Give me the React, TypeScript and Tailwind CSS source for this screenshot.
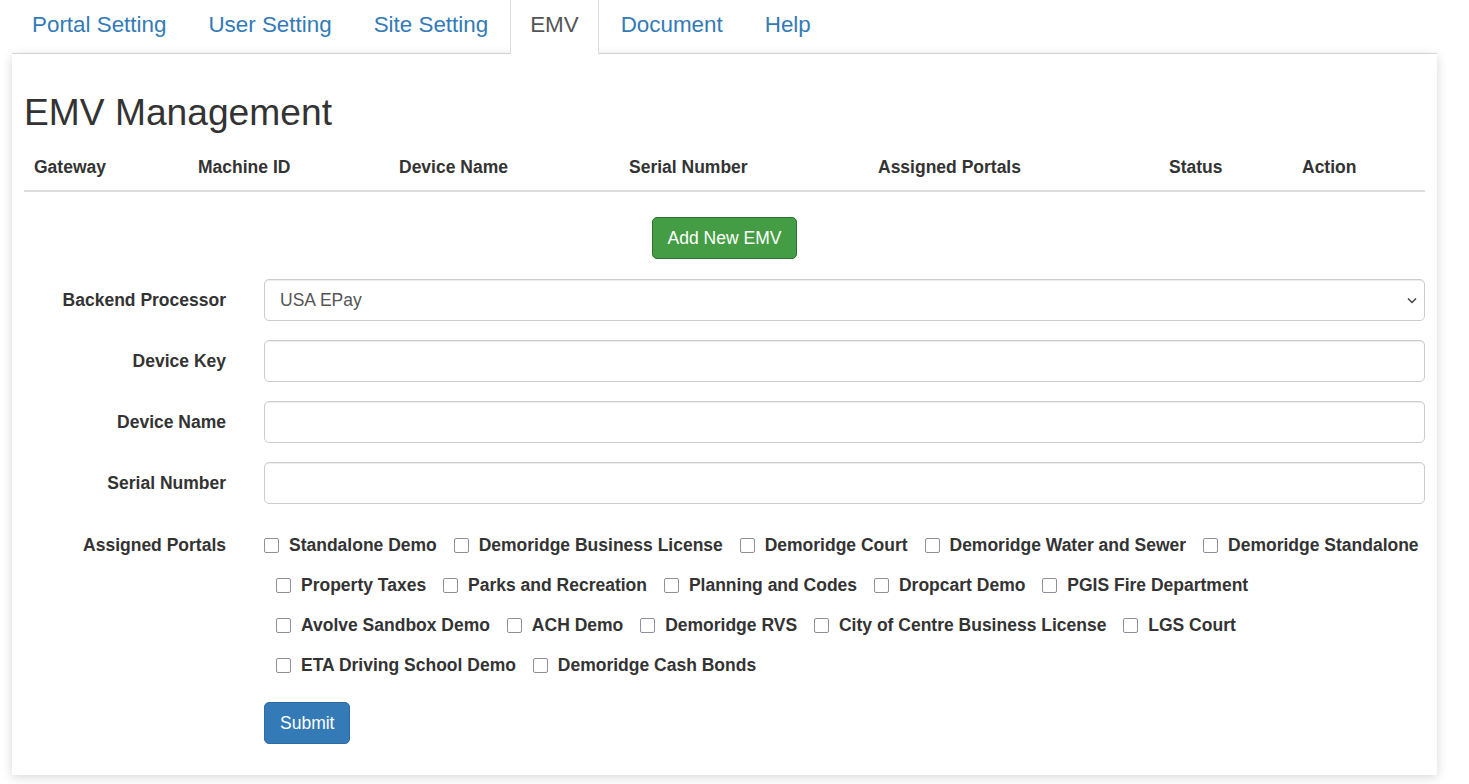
import React from 'react';

const tabs = ['Portal Setting', 'User Setting', 'Site Setting', 'EMV', 'Document', 'Help'];

const columns = ['Gateway', 'Machine ID', 'Device Name', 'Serial Number', 'Assigned Portals', 'Status', 'Action'];

const portals = [
  'Standalone Demo',
  'Demoridge Business License',
  'Demoridge Court',
  'Demoridge Water and Sewer',
  'Demoridge Standalone',
  'Property Taxes',
  'Parks and Recreation',
  'Planning and Codes',
  'Dropcart Demo',
  'PGIS Fire Department',
  'Avolve Sandbox Demo',
  'ACH Demo',
  'Demoridge RVS',
  'City of Centre Business License',
  'LGS Court',
  'ETA Driving School Demo',
  'Demoridge Cash Bonds',
];

const inputClass =
  'block w-full h-[42px] px-[15px] border border-[#ccc] rounded-[5px] bg-white text-[#555] shadow-[inset_0_1px_1px_rgba(0,0,0,0.075)] outline-none';

const App: React.FC = () => {
  return (
    <div className="min-h-screen bg-white font-['Liberation_Sans',Arial,sans-serif] text-[17.5px] text-[#333]">
      <div className="w-[1425px] ml-[12px]">
        {/* Tabs */}
        <ul className="flex h-[54px] border-b border-[#ddd]">
          {tabs.map((tab) => {
            const active = tab === 'EMV';
            return (
              <li key={tab} className="-mb-px mr-[2px]">
                <a
                  href="#"
                  className={
                    active
                      ? 'flex items-center h-[54px] pb-[5px] px-[19px] text-[22.4px] bg-white text-[#555] border-l border-r border-[#ddd]'
                      : 'flex items-center h-[54px] pb-[5px] px-[19px] text-[22.4px] text-[#337ab7] border-l border-r border-transparent'
                  }
                >
                  {tab}
                </a>
              </li>
            );
          })}
        </ul>

        {/* Card */}
        <div className="bg-white px-[12px] pt-[13px] pb-[31px] shadow-[0_2px_10px_rgba(0,0,0,0.16)]">
          <h1 className="mt-[25px] mb-[12px] text-[37.2px] leading-[41px] font-normal text-[#333]">EMV Management</h1>

          {/* Table header */}
          <div className="grid grid-cols-[164px_201px_230px_249px_291px_133px_1fr] border-b-2 border-[#ddd]">
            {columns.map((col) => (
              <div key={col} className="pl-[10px] py-[10px] leading-[25px] font-bold">
                {col}
              </div>
            ))}
          </div>

          <div className="flex justify-center mt-[25px]">
            <button
              type="button"
              className="h-[42px] px-[15px] bg-[#449d44] border border-[#2f6f2f] rounded-[5px] text-white"
            >
              Add New EMV
            </button>
          </div>

          {/* Form */}
          <form className="mt-[20px] grid grid-cols-[202px_1fr] gap-x-[38px] gap-y-[19px]">
            <label className="flex items-center justify-end font-bold">Backend Processor</label>
            <div className="relative">
              <div className={inputClass + ' flex items-center'}>USA EPay</div>
              <svg
                className="absolute right-[7px] top-[17px]"
                width="12"
                height="9"
                viewBox="0 0 12 9"
                fill="none"
                stroke="#444"
                strokeWidth="1.5"
              >
                <path d="M2 2.5l4 4 4-4" />
              </svg>
            </div>

            <label className="flex items-center justify-end font-bold">Device Key</label>
            <input type="text" className={inputClass} />

            <label className="flex items-center justify-end font-bold">Device Name</label>
            <input type="text" className={inputClass} />

            <label className="flex items-center justify-end font-bold">Serial Number</label>
            <input type="text" className={inputClass} />

            <label className="text-right font-bold leading-[40px] pt-[2px]">Assigned Portals</label>
            <div className="pt-[2px] leading-[40px] -mr-[2px]">
              {portals.map((p, i) => (
                <React.Fragment key={p}>
                  {i > 0 && ' '}
                  <label
                    className={
                      i === 0
                        ? 'relative inline-block pl-[25px] font-bold whitespace-nowrap'
                        : 'relative inline-block pl-[25px] ml-[12px] font-bold whitespace-nowrap'
                    }
                  >
                    <span className="absolute left-0 top-[13px] w-[15px] h-[15px] border border-[#8f8f9d] rounded-[2px] bg-white" />
                    {p}
                  </label>
                </React.Fragment>
              ))}
            </div>

            <div />
            <div className="-mt-[2px]">
              <button
                type="submit"
                className="h-[42px] px-[15px] bg-[#337ab7] border border-[#2e6da4] rounded-[5px] text-white"
              >
                Submit
              </button>
            </div>
          </form>
        </div>
      </div>
    </div>
  );
};

export default App;
